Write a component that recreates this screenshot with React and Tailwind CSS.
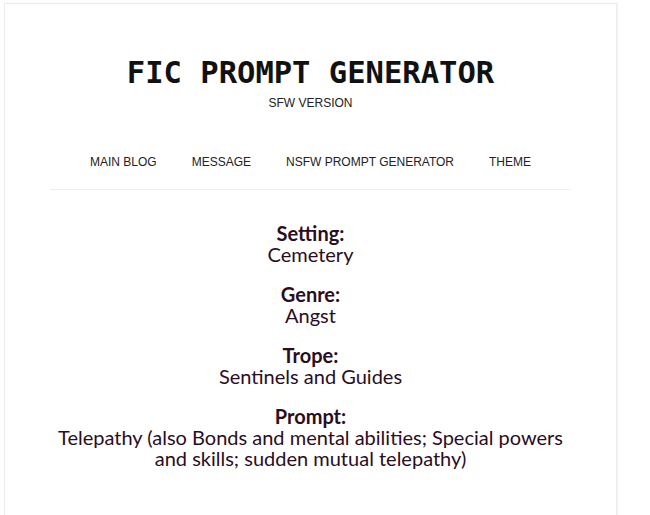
const NAV = ['MAIN BLOG', 'MESSAGE', 'NSFW PROMPT GENERATOR', 'THEME']

const RESULT = [
  { label: 'Setting:', value: 'Cemetery' },
  { label: 'Genre:', value: 'Angst' },
  { label: 'Trope:', value: 'Sentinels and Guides' },
  { label: 'Prompt:', value: 'Telepathy (also Bonds and mental abilities; Special powers and skills; sudden mutual telepathy)' },
]

export default function App() {
  return (
    <div className="min-h-[515px] bg-white pl-1 pt-[3px]">
      <div className="w-[613px] h-[520px] border border-[#ececec] bg-white shadow-[1px_0_2px_rgba(0,0,0,0.06)]">
        {/* Header */}
        <header className="pt-[51px] text-center">
          <h1 className="font-['DejaVu_Sans_Mono',monospace] font-bold text-[30.5px] leading-[36px] text-[#111]">
            FIC PROMPT GENERATOR
          </h1>
          <p className="mt-[3px] font-['Liberation_Sans',Arial,sans-serif] text-[12px] text-[#222]">SFW VERSION</p>
        </header>

        {/* Nav */}
        <nav className="mx-[45px] mt-[42px] pb-[19px] border-b border-[#eeeeee] flex justify-center gap-[35px] font-['Liberation_Sans',Arial,sans-serif] text-[12px] text-[#222]">
          {NAV.map(n => (
            <a key={n} className="leading-[16px]">{n}</a>
          ))}
        </nav>

        {/* Result */}
        <main className="mt-[33px] px-[45px] text-center font-['Lato',sans-serif] text-[20px] leading-[21px] text-[#2b0d22] space-y-[19px]">
          {RESULT.map(r => (
            <div key={r.label}>
              <p className="font-bold">{r.label}</p>
              <p>{r.value}</p>
            </div>
          ))}
        </main>
      </div>
    </div>
  )
}
